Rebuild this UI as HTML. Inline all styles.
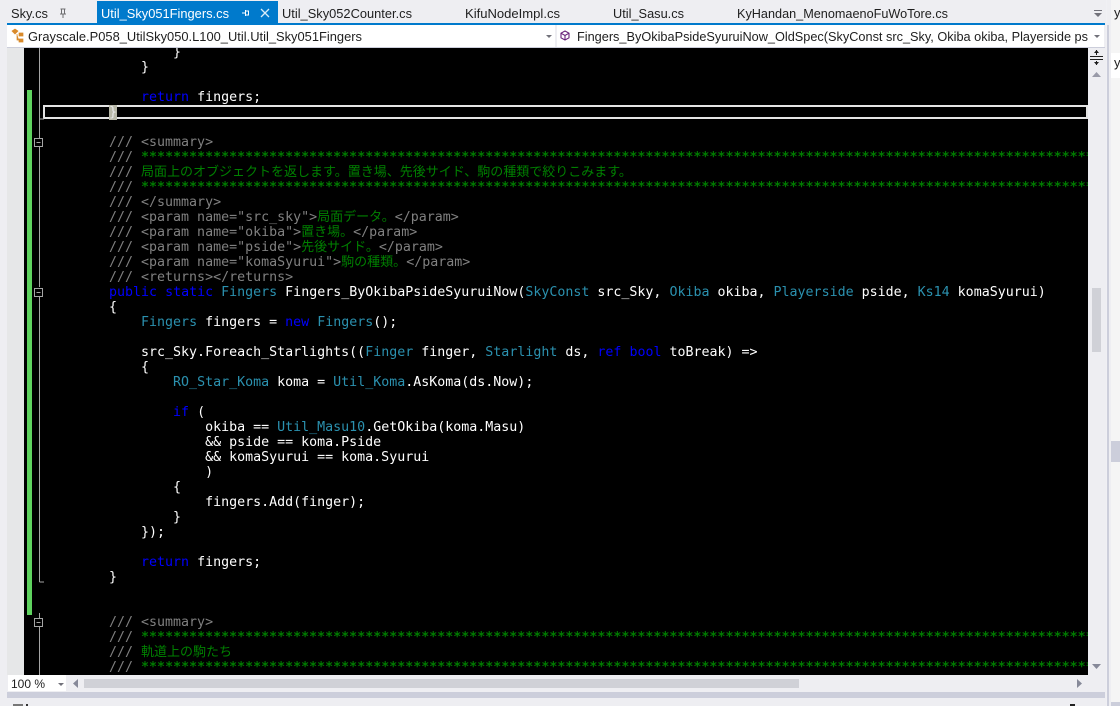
<!DOCTYPE html>
<html><head><meta charset="utf-8"><style>
html,body{margin:0;padding:0;background:#eeeef2;width:1120px;height:706px;overflow:hidden}
.a{position:absolute}
#code{position:absolute;left:24px;top:47px;width:1064px;height:628px;background:#000;overflow:hidden}
pre{position:absolute;left:85px;top:-2px;margin:0;font:13.3px/15px "DejaVu Sans Mono","Liberation Mono",monospace;color:#fff;white-space:pre}
pre b{font-weight:normal;color:#0000ff}
pre i{font-style:normal;color:#2b91af}
pre u{text-decoration:none;color:#808080}
pre s{text-decoration:none;color:#007a00;font-weight:bold}
pre em{font-style:normal;color:#008000;font-family:"Noto Sans CJK JP",sans-serif;font-size:13px;line-height:0}
svg{position:absolute;left:0;top:0}
text{font-family:"Liberation Sans",sans-serif;font-size:13px;fill:#1e1e1e}
</style></head><body>
<div class="a" style="left:7px;top:47px;width:17px;height:628px;background:#e6e7e8"></div>
<div class="a" style="left:1111px;top:0;width:9px;height:706px;background:#f5f5f5"></div>
<div id="code">
<div class="a" style="left:19px;top:58px;width:1045px;height:14px;border:2px solid #e4e4e4;box-sizing:border-box"></div>
<pre>        }
    }

    <b>return</b> fingers;
<span style="background:#b8b8a8;color:#e8e8e8">}</span>

<u>/// &lt;summary&gt;</u>
<u>///</u> <s>************************************************************************************************************************</s>
<u>///</u> <em>局面上のオブジェクトを返します。置き場、先後サイド、駒の種類で絞りこみます。</em>
<u>///</u> <s>************************************************************************************************************************</s>
<u>/// &lt;/summary&gt;</u>
<u>/// &lt;param name="src_sky"&gt;</u><em>局面データ。</em><u>&lt;/param&gt;</u>
<u>/// &lt;param name="okiba"&gt;</u><em>置き場。</em><u>&lt;/param&gt;</u>
<u>/// &lt;param name="pside"&gt;</u><em>先後サイド。</em><u>&lt;/param&gt;</u>
<u>/// &lt;param name="komaSyurui"&gt;</u><em>駒の種類。</em><u>&lt;/param&gt;</u>
<u>/// &lt;returns&gt;&lt;/returns&gt;</u>
<b>public</b> <b>static</b> <i>Fingers</i> Fingers_ByOkibaPsideSyuruiNow(<i>SkyConst</i> src_Sky, <i>Okiba</i> okiba, <i>Playerside</i> pside, <i>Ks14</i> komaSyurui)
{
    <i>Fingers</i> fingers = <b>new</b> <i>Fingers</i>();

    src_Sky.Foreach_Starlights((<i>Finger</i> finger, <i>Starlight</i> ds, <b>ref</b> <b>bool</b> toBreak) =&gt;
    {
        <i>RO_Star_Koma</i> koma = <i>Util_Koma</i>.AsKoma(ds.Now);

        <b>if</b> (
            okiba == <i>Util_Masu10</i>.GetOkiba(koma.Masu)
            &amp;&amp; pside == koma.Pside
            &amp;&amp; komaSyurui == koma.Syurui
            )
        {
            fingers.Add(finger);
        }
    });

    <b>return</b> fingers;
}


<u>/// &lt;summary&gt;</u>
<u>///</u> <s>************************************************************************************************************************</s>
<u>///</u> <em>軌道上の駒たち</em>
<u>///</u> <s>************************************************************************************************************************</s></pre>
</div>
<svg width="1120" height="706" viewBox="0 0 1120 706">
  <!-- gutter -->
  <rect x="27" y="90" width="5" height="525" fill="#5fd35f"/>
  <g stroke="#a5a5a5" fill="none">
    <path d="M39.500 47V138M39.500 147V287M39.500 297V582M39.500 582H44M39.500 119H44M39.500 627V675"/>
    <path d="M39.500 613V618"/>
    <rect x="34.500" y="138.500" width="8" height="8" fill="#000"/>
    <path d="M36.500 142.500h4"/>
    <rect x="34.500" y="288.500" width="8" height="8" fill="#000"/>
    <path d="M36.500 292.500h4"/>
    <rect x="34.500" y="618.500" width="8" height="8" fill="#000"/>
    <path d="M36.500 622.500h4"/>
  </g>
  <!-- tab strip -->
  <rect x="97" y="1" width="181" height="22" fill="#007acc"/>
  <rect x="7" y="23" width="1098" height="2" fill="#007acc"/>
  <text x="11" y="18" textLength="37" lengthAdjust="spacingAndGlyphs">Sky.cs</text>
  <path d="M60.500 9h5M61.500 9v5h3v-5M60 14h6M63 14v4" stroke="#6d6d70" fill="none"/>
  <text x="101" y="18" textLength="128" lengthAdjust="spacingAndGlyphs" style="fill:#fff">Util_Sky051Fingers.cs</text>
  <path d="M242 13h3M245.500 10v6M245.500 11h3v4h-3M248 13h1" stroke="#fff" fill="none"/>
  <path d="M261 9l8 8M269 9l-8 8" stroke="#d8ecf8" stroke-width="1.300" fill="none"/>
  <text x="282" y="18" textLength="130" lengthAdjust="spacingAndGlyphs">Util_Sky052Counter.cs</text>
  <text x="465" y="18" textLength="95" lengthAdjust="spacingAndGlyphs">KifuNodeImpl.cs</text>
  <text x="613" y="18" textLength="71" lengthAdjust="spacingAndGlyphs">Util_Sasu.cs</text>
  <text x="737" y="18" textLength="211" lengthAdjust="spacingAndGlyphs">KyHandan_MenomaenoFuWoTore.cs</text>
  <path d="M1094 10.500h8" stroke="#71717a"/><path d="M1094 13h8l-4 4z" fill="#71717a"/>
  <!-- nav bar -->
  <rect x="7" y="25" width="548" height="22" fill="#fff"/>
  <rect x="557" y="25" width="547" height="22" fill="#fff"/>
  <rect x="7" y="47" width="1098" height="1" fill="#cccedb"/>
  <path d="M12 31l3-2 3 2-3 3zM19 33h4v3h-4zM19 39h4v3h-4zM17 34v6h2" fill="#d98a2b" stroke="#d98a2b" stroke-width=".7"/>
  <text x="28" y="41" textLength="334" lengthAdjust="spacingAndGlyphs">Grayscale.P058_UtilSky050.L100_Util.Util_Sky051Fingers</text>
  <path d="M546 35h6l-3 3z" fill="#71717a"/>
  <path d="M565 31l4 2.200v4.600l-4 2.200-4-2.200v-4.600zM561 33.200l4 2.300 4-2.300M565 35.500v4.500" stroke="#68217a" fill="none" stroke-width="1.100"/>
  <text x="577" y="41" textLength="511" lengthAdjust="spacingAndGlyphs">Fingers_ByOkibaPsideSyuruiNow_OldSpec(SkyConst src_Sky, Okiba okiba, Playerside ps</text>
  <path d="M1094 35h6l-3 3z" fill="#71717a"/>
  <!-- vertical scrollbar -->
  <path d="M1090 56.500h13M1090 59.500h13M1096.500 50v5M1096.500 61v4" stroke="#1e1e1e" fill="none"/>
  <path d="M1094 53h5l-2.500-3zM1094 62h5l-2.500 3z" fill="#1e1e1e"/>
  <path d="M1092 77h9l-4.500-5z" fill="#999aa8"/>
  <rect x="1092" y="288" width="9" height="64" fill="#d0d1d7"/>
  <path d="M1092 664h9l-4.500 5z" fill="#868999"/>
  <rect x="1106" y="0" width="1" height="706" fill="#f0f0f4"/>
  <rect x="1107" y="25" width="2" height="681" fill="#cccedb"/>
  <!-- right panel -->
  <rect x="1111" y="53" width="9" height="25" fill="#fff"/>
  <rect x="1111" y="441" width="9" height="21" fill="#cccedb"/>
  <rect x="1111" y="702" width="9" height="4" fill="#cccedb"/>
  <text x="1114" y="17" style="font-size:13px">y</text>
  <text x="1114" y="67" style="font-size:13px">y</text>
  <!-- bottom bar -->
  <rect x="8" y="675" width="58" height="16" fill="#fff"/>
  <text x="11" y="688" style="font-size:12px">100 %</text>
  <path d="M58 683h6l-3 3z" fill="#71717a"/>
  <path d="M78 679v9l-5-4.500z" fill="#868999"/>
  <rect x="84" y="679" width="715" height="9" fill="#d0d1d7"/>
  <path d="M1077 679v9l5-4.500z" fill="#868999"/>
  <rect x="7" y="692" width="1098" height="6" fill="#cccedb"/>
  <rect x="13" y="704" width="10" height="2" fill="#777"/>
  <rect x="26" y="704" width="2" height="2" fill="#333"/>
  <rect x="1070" y="704" width="5" height="2" fill="#222"/>
</svg>
</body></html>
